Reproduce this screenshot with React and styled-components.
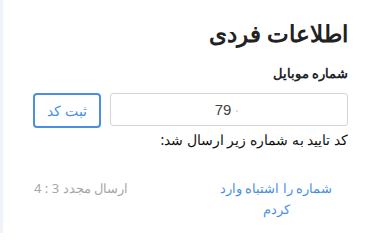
import React from 'react';
import styled, { createGlobalStyle } from 'styled-components';

const GlobalStyle = createGlobalStyle`
  html, body {
    margin: 0;
    padding: 0;
    background: #fff;
  }
  body {
    font-family: "Noto Sans", sans-serif;
    color: #212529;
  }
`;

const Shell = styled.div`
  display: flex;
  height: 233px;
  overflow: hidden;
`;

const Edge = styled.div`
  width: 3px;
  flex: none;
  background: #eef3fa;
`;

const Page = styled.div`
  flex: 1;
  background: #fff;
  direction: rtl;
  padding: 17px 23px 0 30px;
  box-sizing: border-box;
`;

const Title = styled.h1`
  margin: 0;
  font-size: 23px;
  font-weight: bold;
  line-height: 32px;
  color: #222;
`;

const Label = styled.div`
  margin-top: 15px;
  font-size: 13px;
  font-weight: bold;
  line-height: 18px;
`;

const Row = styled.div`
  display: flex;
  gap: 9px;
  margin-top: 11px;
`;

const Input = styled.div`
  flex: 1;
  height: 33px;
  box-sizing: border-box;
  border: 1px solid #d4d4d4;
  border-radius: 3px;
  display: flex;
  align-items: center;
  justify-content: center;
  direction: ltr;
  font-family: "Liberation Sans", sans-serif;
  font-size: 15px;
  color: #444;
`;

const Faint = styled.span`
  color: #ccc;
  margin-left: 3px;
  letter-spacing: 4px;
`;

const Button = styled.button`
  width: 68px;
  height: 35px;
  box-sizing: border-box;
  border: 2px solid #4a8fe3;
  border-radius: 4px;
  background: #fff;
  color: #4a8fe3;
  font-family: inherit;
  font-size: 14px;
  padding: 0;
`;

const Note = styled.div`
  margin-top: 2px;
  font-size: 14px;
  line-height: 20px;
  color: #111;
`;

const Footer = styled.div`
  display: flex;
  justify-content: space-between;
  align-items: flex-start;
  margin-top: 28px;
  font-size: 13px;
  line-height: 21px;
`;

const Wrong = styled.a`
  width: 142px;
  margin-right: 1px;
  text-align: center;
  color: #4a8fe3;
  text-decoration: none;
`;

const Resend = styled.span`
  color: #a7a7a7;
  margin-left: 1px;
`;

export default function App() {
  return (
    <>
      <GlobalStyle />
      <Shell>
        <Edge />
        <Page>
          <Title>اطلاعات فردی</Title>
          <Label>شماره موبایل</Label>
          <Row>
            <Input>
              79<Faint>·</Faint>
            </Input>
            <Button>ثبت کد</Button>
          </Row>
          <Note>کد تایید به شماره زیر ارسال شد:</Note>
          <Footer>
            <Wrong href="#">شماره را اشتباه وارد کردم</Wrong>
            <Resend>ارسال مجدد 3 : 4</Resend>
          </Footer>
        </Page>
      </Shell>
    </>
  );
}
